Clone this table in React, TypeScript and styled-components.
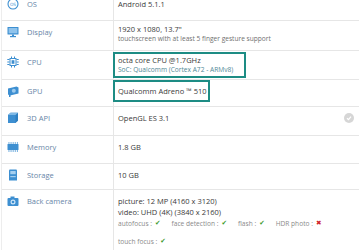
import React from "react";
import styled, { createGlobalStyle } from "styled-components";

const GlobalStyle = createGlobalStyle`
  html, body { margin: 0; padding: 0; background: #fff; overflow: hidden; }
  body { font-family: "Open Sans", "Liberation Sans", sans-serif; }
`;

const BLUE = "#3d8fd1";

const Table = styled.div`
  margin-top: -7px;
  margin-left: 1px;
  border-left: 1px solid #ededed;
  width: 358px;
`;

const Row = styled.div<{ $h: number }>`
  display: grid;
  grid-template-columns: 111px 1fr;
  height: ${(p) => p.$h}px;
  border-bottom: 1px solid #e6e6e6;
`;

const LabelCell = styled.div`
  display: flex;
  align-items: center;
  align-self: start;
  gap: 8px;
  padding: 6px 0 0 5px;
  height: 10px;
  font-size: 7.5px;
  line-height: 10px;
  color: #6886a8;
`;

const IconBox = styled.span`
  display: inline-flex;
  width: 12px;
  height: 12px;
  flex: none;
`;

const ValueCell = styled.div<{ $pt?: number }>`
  border-left: 1px solid #e6e6e6;
  padding: ${(p) => (p.$pt ?? 6)}px 6px 0 4px;
  font-size: 7.5px;
  line-height: 10px;
  color: #3a3a3a;
  min-width: 0;
`;

const FlexValue = styled(ValueCell)`
  display: flex;
  justify-content: space-between;
  align-items: flex-start;
`;

const Sub = styled.div<{ $tone?: string }>`
  font-size: 6.6px;
  line-height: 10px;
  color: ${(p) => p.$tone ?? "#707070"};
  white-space: nowrap;
`;

const Main = styled.div<{ $lh?: number }>`
  line-height: ${(p) => p.$lh ?? 10}px;
  white-space: nowrap;
`;

const HighlightBox = styled.div<{ $w: number; $mt: number; $pt: number }>`
  box-sizing: border-box;
  width: ${(p) => p.$w}px;
  margin: ${(p) => p.$mt}px 0 0 -5px;
  border: 2px solid #1d8c84;
  padding: ${(p) => p.$pt}px 3px;
`;

const FeatureLine = styled.div<{ $mt?: number }>`
  display: flex;
  align-items: center;
  gap: 3px;
  margin-top: ${(p) => p.$mt ?? 0}px;
  font-size: 6.6px;
  line-height: 11px;
  color: #8a8a8a;
  white-space: nowrap;
`;

const Mark = styled.span<{ $ok: boolean }>`
  font-family: "DejaVu Sans", sans-serif;
  font-size: 6.6px;
  color: ${(p) => (p.$ok ? "#3b9a2b" : "#d01f2a")};
  margin-right: 8px;
`;

const GreyCheck = styled.span`
  display: inline-flex;
  align-items: center;
  justify-content: center;
  width: 10px;
  height: 10px;
  border-radius: 50%;
  background: #d6d6d6;
`;

const Icon = ({ kind }: { kind: string }) => {
  let body: React.ReactNode = null;
  switch (kind) {
    case "os":
      body = (
        <>
          <circle cx="6" cy="6" r="5" fill="none" stroke={BLUE} strokeWidth="1.1" />
          <text x="6" y="7.6" fontSize="4.4" textAnchor="middle" fill={BLUE} fontFamily="DejaVu Sans">OS</text>
        </>
      );
      break;
    case "display":
      body = (
        <>
          <rect x="0.5" y="1" width="11" height="7.5" rx="0.6" fill={BLUE} />
          <rect x="1.6" y="2" width="8.8" height="5.3" fill="#8fc3ec" />
          <rect x="5" y="8.5" width="2" height="1.6" fill={BLUE} />
          <rect x="3" y="10" width="6" height="1.2" fill={BLUE} />
        </>
      );
      break;
    case "cpu":
      body = (
        <>
          <rect x="3" y="2.5" width="6" height="7" fill="none" stroke={BLUE} strokeWidth="1" />
          <rect x="4.6" y="4.2" width="2.8" height="3.6" fill={BLUE} />
          {[3.5, 6, 8.5].map((y) => (
            <g key={y}>
              <rect x="0.3" y={y - 0.5} width="2.2" height="1" fill={BLUE} />
              <rect x="9.5" y={y - 0.5} width="2.2" height="1" fill={BLUE} />
            </g>
          ))}
          <rect x="4" y="0.5" width="1" height="1.6" fill={BLUE} />
          <rect x="7" y="0.5" width="1" height="1.6" fill={BLUE} />
          <rect x="4" y="9.9" width="1" height="1.6" fill={BLUE} />
          <rect x="7" y="9.9" width="1" height="1.6" fill={BLUE} />
        </>
      );
      break;
    case "gpu":
      body = (
        <>
          <path d="M1 3.5 L9.5 1.5 L11.5 2.5 L11.5 8.5 L3 10.5 L1 9.5 Z" fill={BLUE} />
          <circle cx="6.8" cy="5.8" r="2" fill="#9ccaee" />
          <rect x="2" y="10" width="1.5" height="2" fill={BLUE} />
        </>
      );
      break;
    case "api":
      body = (
        <>
          <path d="M1 3 L3.5 0.8 L11 0.8 L11 8.8 L8.5 11 L1 11 Z" fill="#2f7fc0" />
          <rect x="1" y="3" width="7.5" height="8" fill={BLUE} />
          <path d="M1 3 L3.5 0.8 L11 0.8 L8.5 3 Z" fill="#7fb9e6" />
        </>
      );
      break;
    case "memory":
      body = (
        <>
          <rect x="0.5" y="3" width="11" height="6" rx="0.5" fill={BLUE} />
          {[1.5, 3.6, 5.7, 7.8, 9.9].map((x) => (
            <g key={x}>
              <rect x={x} y="1.2" width="0.9" height="1.6" fill={BLUE} />
              <rect x={x} y="9.2" width="0.9" height="1.6" fill={BLUE} />
            </g>
          ))}
        </>
      );
      break;
    case "storage":
      body = (
        <>
          <path d="M2 1.5 Q2 0.5 3 0.5 L9 0.5 Q10 0.5 10 1.5 L10 11.5 L2 11.5 Z" fill={BLUE} />
          <rect x="3.3" y="2" width="5.4" height="3.2" fill="#a5cff0" />
          <rect x="3.3" y="7" width="5.4" height="1.2" fill="#a5cff0" />
        </>
      );
      break;
    case "camera":
      body = (
        <>
          <rect x="3.5" y="1.5" width="4" height="2" fill={BLUE} />
          <rect x="0.5" y="3" width="11" height="8" rx="1" fill={BLUE} />
          <circle cx="6" cy="7" r="2.5" fill="#cfe6f8" />
          <circle cx="6" cy="7" r="1.3" fill={BLUE} />
        </>
      );
      break;
  }
  return (
    <IconBox>
      <svg width="12" height="12" viewBox="0 0 12 12">{body}</svg>
    </IconBox>
  );
};

const Label = ({ icon, text }: { icon: string; text: string }) => (
  <LabelCell>
    <Icon kind={icon} />
    <span>{text}</span>
  </LabelCell>
);

export default function App() {
  return (
    <>
      <GlobalStyle />
      <Table>
        <Row $h={27}>
          <Label icon="os" text="OS" />
          <ValueCell>
            <Main>Android 5.1.1</Main>
          </ValueCell>
        </Row>
        <Row $h={29}>
          <Label icon="display" text="Display" />
          <ValueCell $pt={3}>
            <Main>1920 x 1080, 13.7"</Main>
            <Sub>touchscreen with at least 5 finger gesture support</Sub>
          </ValueCell>
        </Row>
        <Row $h={28}>
          <Label icon="cpu" text="CPU" />
          <ValueCell $pt={0}>
            <HighlightBox $w={133} $mt={1} $pt={1}>
              <Main>octa core CPU @1.7GHz</Main>
              <Sub $tone="#4f8896">SoC: Qualcomm (Cortex A72 - ARMv8)</Sub>
            </HighlightBox>
          </ValueCell>
        </Row>
        <Row $h={26}>
          <Label icon="gpu" text="GPU" />
          <ValueCell $pt={0}>
            <HighlightBox $w={97} $mt={0} $pt={4}>
              <Main>Qualcomm Adreno ™ 510</Main>
            </HighlightBox>
          </ValueCell>
        </Row>
        <Row $h={28}>
          <Label icon="api" text="3D API" />
          <FlexValue>
            <Main>OpenGL ES 3.1</Main>
            <GreyCheck>
              <svg width="6" height="6" viewBox="0 0 6 6">
                <path d="M1 3.2 L2.5 4.6 L5 1.6" fill="none" stroke="#fff" strokeWidth="1.2" />
              </svg>
            </GreyCheck>
          </FlexValue>
        </Row>
        <Row $h={27}>
          <Label icon="memory" text="Memory" />
          <ValueCell>
            <Main>1.8 GB</Main>
          </ValueCell>
        </Row>
        <Row $h={25}>
          <Label icon="storage" text="Storage" />
          <ValueCell>
            <Main>10 GB</Main>
          </ValueCell>
        </Row>
        <Row $h={70}>
          <Label icon="camera" text="Back camera" />
          <ValueCell $pt={6}>
            <Main $lh={11}>picture: 12 MP (4160 x 3120)</Main>
            <Main $lh={11}>video: UHD (4K) (3840 x 2160)</Main>
            <FeatureLine>
              <span>autofocus :</span>
              <Mark $ok>✔</Mark>
              <span>face detection :</span>
              <Mark $ok>✔</Mark>
              <span>flash :</span>
              <Mark $ok>✔</Mark>
              <span>HDR photo :</span>
              <Mark $ok={false}>✖</Mark>
            </FeatureLine>
            <FeatureLine $mt={7}>
              <span>touch focus :</span>
              <Mark $ok>✔</Mark>
            </FeatureLine>
          </ValueCell>
        </Row>
      </Table>
    </>
  );
}
